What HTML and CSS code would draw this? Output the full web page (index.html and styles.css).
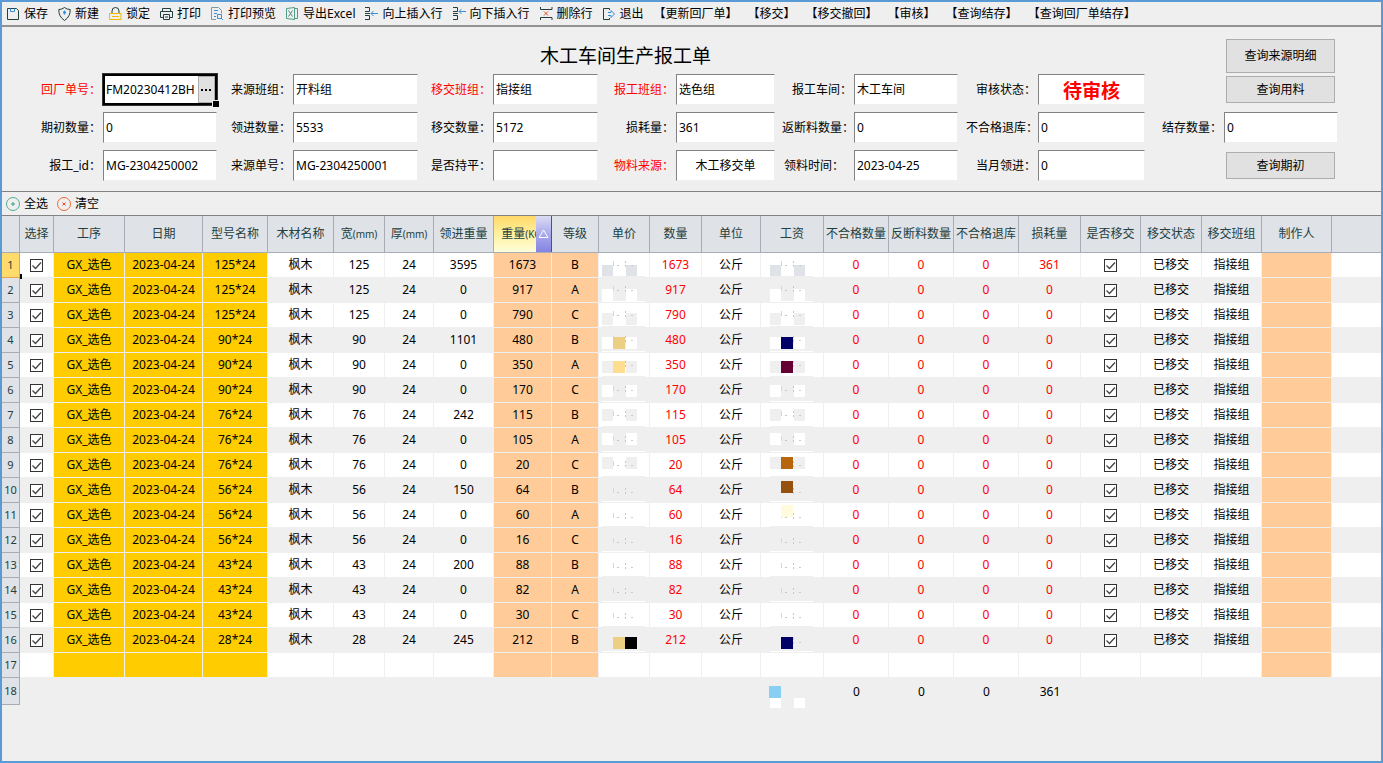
FILE: index.html
```html
<!DOCTYPE html>
<html lang="zh-CN">
<head>
  <meta charset="UTF-8">
  <title>木工车间生产报工单</title>
  <meta name="viewport" content="width=device-width, initial-scale=1.0">
  <link rel="stylesheet" href="styles.css">
</head>
<body>
  <nav class="toolbar">
    <button type="button">
      <svg class="icon" viewBox="0 0 14 14"><path d="M.5 1.5h9l2 2v9H.5z" stroke="#22403e"/><path d="M3.5 1.5v3h4v-3" stroke="#3a8ed8"/></svg>保存
    </button>
    <button type="button">
      <svg class="icon" viewBox="0 0 14 14"><path d="M6.500 .5Q4 2.500 .8 2.500Q.5 9.500 6.500 13.500Q12.500 9.500 12.200 2.500Q9 2.500 6.500 .5z" stroke="#22403e"/><path d="M6.500 3.500v4M5 5.500h3" stroke="#3a8ed8" stroke-width="1.500"/></svg>新建
    </button>
    <button type="button">
      <svg class="icon" viewBox="0 0 14 14"><path d="M3 7V4a3.500 3.500 0 0 1 7 0v3" stroke="#22403e"/><path d="M.5 6.500h11.500v6H.5zM3 9.500h7" stroke="#f5b800"/></svg>锁定
    </button>
    <button type="button">
      <svg class="icon" viewBox="0 0 14 14"><path d="M2.500 4V1.500h8V4M3 10.500H.5v-6h12v6H10M3.500 7.500h6v5h-6z" stroke="#22403e"/><path d="M5 10h3" stroke="#22403e"/></svg>打印
    </button>
    <button type="button">
      <svg class="icon" viewBox="0 0 14 14"><path d="M5 12.500H.5v-12h7l3 3v3" stroke="#7a9aa5"/><path d="M3 3.500h4M3 6.500h3M3 9.500h2M6.500 7.500h4v4h-4zM10 11l2 2" stroke="#3a8ed8"/></svg>打印预览
    </button>
    <button type="button">
      <svg class="icon" viewBox="0 0 14 14"><path d="M.5 1.500l8-1v12l-8-1zM8.500 1.500h3v10h-3" stroke="#4f9d86"/><path d="M2.500 3.500l4 6M6.500 3.500l-4 6" stroke="#3f8f78"/></svg>导出Excel
    </button>
    <button type="button">
      <svg class="icon" viewBox="0 0 14 14"><path d="M0 .5h4.500v4H0M0 8.500h4.500v4H0M0 6.500h5" stroke="#22403e"/><path d="M13 6.500H6M8.500 4L6 6.500 8.500 9" stroke="#3a8ed8"/></svg>向上插入行
    </button>
    <button type="button">
      <svg class="icon" viewBox="0 0 14 14"><path d="M0 .5h4.500v4H0M0 8.500h4.500v4H0M0 6.500h5" stroke="#22403e"/><path d="M13 4.500H6M8.500 2L6 4.500 8.500 7" stroke="#3a8ed8"/></svg>向下插入行
    </button>
    <button type="button">
      <svg class="icon" viewBox="0 0 14 14"><path d="M.5 0v2.500h11.500V0M.5 13v-2.500h11.500V13" stroke="#22403e"/><path d="M4 4.500l4 4M8 4.500l-4 4" stroke="#e8502a"/></svg>删除行
    </button>
    <button type="button">
      <svg class="icon" viewBox="0 0 14 14"><path d="M6.500 3V1.500h-6v11h6V11" stroke="#22403e"/><path d="M5 5.500h3V3.500l3.500 3.500L8 10.500v-2H5" stroke="#3a8ed8"/></svg>退出
    </button>
    <button type="button">【更新回厂单】</button>
    <button type="button">【移交】</button>
    <button type="button">【移交撤回】</button>
    <button type="button">【审核】</button>
    <button type="button">【查询结存】</button>
    <button type="button">【查询回厂单结存】</button>
  </nav>

  <form class="bill">
    <h1>木工车间生产报工单</h1>
    <button type="button" class="query tall">查询来源明细</button>

    <label class="required first" for="billNo">回厂单号：</label>
    <div class="picker">
      <input type="text" id="billNo" value="FM20230412BH">
      <button type="button" aria-label="选择回厂单号"><svg viewBox="0 0 11 2"><path d="M0 0h2v2H0zM4 0h2v2H4zM8 0h2v2H8z"/></svg></button>
    </div>
    <label for="srcTeam">来源班组：</label>
    <input type="text" id="srcTeam" value="开料组">
    <label class="required" for="moveTeam">移交班组：</label>
    <input type="text" id="moveTeam" value="指接组">
    <label class="required" for="workTeam">报工班组：</label>
    <input type="text" id="workTeam" value="选色组">
    <label for="workshop">报工车间：</label>
    <input type="text" id="workshop" value="木工车间">
    <label for="status">审核状态：</label>
    <input type="text" id="status" class="status" value="待审核">
    <button type="button" class="query">查询用料</button>

    <label class="first" for="startQty">期初数量：</label>
    <input type="text" id="startQty" value="0">
    <label for="inQty">领进数量：</label>
    <input type="text" id="inQty" value="5533">
    <label for="moveQty">移交数量：</label>
    <input type="text" id="moveQty" value="5172">
    <label for="lossQty">损耗量：</label>
    <input type="text" id="lossQty" value="361">
    <label class="long" for="backQty">返断料数量：</label>
    <input type="text" id="backQty" value="0">
    <label class="long" for="badQty">不合格退库：</label>
    <input type="text" id="badQty" value="0">
    <label for="restQty">结存数量：</label>
    <input type="text" id="restQty" value="0">

    <label class="first" for="workId">报工_id：</label>
    <input type="text" id="workId" value="MG-2304250002">
    <label for="srcNo">来源单号：</label>
    <input type="text" id="srcNo" value="MG-2304250001">
    <label for="balanced">是否持平：</label>
    <input type="text" id="balanced" value="">
    <label class="required" for="material">物料来源：</label>
    <input type="text" id="material" class="center" value="木工移交单">
    <label class="early" for="pickDate">领料时间：</label>
    <input type="text" id="pickDate" value="2023-04-25">
    <label for="monthIn">当月领进：</label>
    <input type="text" id="monthIn" value="0">
    <button type="button" class="query">查询期初</button>
  </form>

  <div class="toolbar grid-bar">
    <button type="button">
      <svg class="icon" viewBox="0 0 14 14"><circle cx="6" cy="7" r="6.500" stroke="#4fae94"/><path d="M6 5v4M4 7h4" stroke="#3f9f86"/></svg>全选
    </button>
    <button type="button">
      <svg class="icon" viewBox="0 0 14 14"><circle cx="6" cy="7" r="6.500" stroke="#f06a30"/><path d="M4.500 5.500l3 3M7.500 5.500l-3 3" stroke="#e8502a"/></svg>清空
    </button>
  </div>

  <table class="sheet">
    <colgroup>
      <col class="w18"><col class="w34"><col class="w71"><col class="w78"><col class="w65"><col class="w66">
      <col class="w51"><col class="w49"><col class="w60"><col class="w58"><col class="w47"><col class="w51">
      <col class="w52"><col class="w59"><col class="w63"><col class="w65"><col class="w65"><col class="w65">
      <col class="w62"><col class="w60"><col class="w61"><col class="w60"><col class="w70"><col>
    </colgroup>
    <thead>
      <tr>
        <th></th><th>选择</th><th>工序</th><th>日期</th><th>型号名称</th><th>木材名称</th>
        <th>宽<small>(mm)</small></th><th>厚<small>(mm)</small></th><th>领进重量</th>
        <th class="sorted">重量<small>(KG)</small><button type="button" aria-label="升序"><svg viewBox="0 0 11 10"><path d="M5.500 1L10 8.500H1z"/></svg></button></th>
        <th>等级</th><th>单价</th><th>数量</th><th>单位</th><th>工资</th><th>不合格数量</th><th>反断料数量</th>
        <th>不合格退库</th><th>损耗量</th><th>是否移交</th><th>移交状态</th><th>移交班组</th><th>制作人</th><th></th>
      </tr>
    </thead>
    <tbody id="rows"></tbody>
  </table>

  <script>
    // 型号, 宽, 领进重量, 重量, 等级
    const data = [
      ["125*24", 125, 3595, 1673, "B"],
      ["125*24", 125, 0, 917, "A"],
      ["125*24", 125, 0, 790, "C"],
      ["90*24", 90, 1101, 480, "B"],
      ["90*24", 90, 0, 350, "A"],
      ["90*24", 90, 0, 170, "C"],
      ["76*24", 76, 242, 115, "B"],
      ["76*24", 76, 0, 105, "A"],
      ["76*24", 76, 0, 20, "C"],
      ["56*24", 56, 150, 64, "B"],
      ["56*24", 56, 0, 60, "A"],
      ["56*24", 56, 0, 16, "C"],
      ["43*24", 43, 200, 88, "B"],
      ["43*24", 43, 0, 82, "A"],
      ["43*24", 43, 0, 30, "C"],
      ["28*24", 28, 245, 212, "B"]
    ];

    // 打码色块: x, y, 颜色, 相对第一行单元格
    const priceBlocks = [[14, 84, "#edcf83"], [14, 108, "#ffdd90"], [14, 384, "#edcf83"], [26, 384, "#000"]];
    const payBlocks = [
      [20, 84, "#000066"], [20, 108, "#660033"], [20, 204, "#b8660b"], [20, 228, "#965010"],
      [20, 252, "#fffbdc"], [20, 384, "#000066"], [8, 433, "#87cff3"]
    ];

    function mosaic(x, blocks) {
      let s = "";
      const rect = (rx, ry, w, h, c) => { s += `<rect x="${rx}" y="${ry}" width="${w}" height="${h}" fill="${c}"/>`; };
      for (let i = 0; i < 16; i++) {
        const tone = i === 0 ? "#dfe2e7" : i % 2 ? "#fff" : "#efefef";
        const y = 12 + i * 24;
        if (i < 9) {
          rect(x, y, 11, 12, tone);
          rect(x + 24, y, 11, 12, tone);
        }
        // 行间的残边
        rect(x, i * 25 + 23, 43, 3, i % 2 ? "#fff" : "#efefef");
        // 数字残留的像素
        const t = i * 25 + (i < 9 ? 8 : 10);
        rect(x + 11, t, 1, 5, "#d5d5dc");
        rect(x + 15, t + 4, 2, 1, "#c4c4c4");
        rect(x + 23, t, 1, 2, "#c8c8bc");
        rect(x + 23, t + 4, 1, 2, "#c8c8bc");
        rect(x + 29, t + 4, 2, 1, "#cccccc");
      }
      blocks.forEach(([bx, by, c]) => rect(bx, by, 12, 12, c));
      return s;
    }

    const priceMask = `<svg class="mask">${mosaic(3, priceBlocks)}</svg>`;
    const payMask = `<svg class="mask">${mosaic(9, payBlocks)}<rect x="9" y="445" width="11" height="10" fill="#fff"/><rect x="33" y="445" width="11" height="10" fill="#fff"/></svg>`;
    const check = (name) => `<input type="checkbox" aria-label="${name}" checked>`;

    let html = "";
    data.forEach(([model, width, inWeight, weight, grade], i) => {
      html += `<tr>
        <th${i ? "" : ' class="current"'}>${i + 1}</th>
        <td${i ? "" : ' class="active"'}>${check("选择")}</td>
        <td class="gold">GX_选色</td><td class="gold">2023-04-24</td><td class="gold">${model}</td>
        <td>枫木</td><td>${width}</td><td>24</td><td>${inWeight}</td>
        <td class="peach">${weight}</td><td class="peach">${grade}</td>
        <td class="masked">${i ? "" : priceMask}</td><td class="red">${weight}</td><td>公斤</td>
        <td class="masked">${i ? "" : payMask}</td>
        <td class="red">0</td><td class="red">0</td><td class="red">0</td><td class="red">${i ? 0 : 361}</td>
        <td>${check("是否移交")}</td><td>已移交</td><td>指接组</td><td class="peach"></td><td></td>
      </tr>`;
    });

    const colors = { 2: "gold", 3: "gold", 4: "gold", 9: "peach", 10: "peach", 22: "peach" };
    html += "<tr><th>17</th>";
    for (let c = 1; c < 24; c++) html += `<td class="${colors[c] || ""}"></td>`;
    html += "</tr>";

    const totals = { 15: 0, 16: 0, 17: 0, 18: 361 };
    html += '<tr class="total"><th>18</th>';
    for (let c = 1; c < 24; c++) html += `<td>${totals[c] ?? ""}</td>`;
    html += "</tr>";

    document.getElementById("rows").innerHTML = html;
  </script>
</body>
</html>
```
FILE: styles.css
```css
* {
  box-sizing: border-box;
}

body {
  margin: 0;
  min-height: 100vh;
  border: 2px solid #5b9bd5;
  background: #efefef;
  color: #000;
  font-family: "Noto Sans", "Noto Sans CJK SC", sans-serif;
  font-size: 12px;
  line-height: 18px;
}

button,
input {
  font: inherit;
  color: inherit;
}

/* toolbars */
.toolbar {
  display: flex;
  align-items: center;
  gap: 10px;
  height: 25px;
  padding: 0 5px;
  border-bottom: 2px solid #929292;
}

.toolbar button {
  display: flex;
  align-items: center;
  gap: 3px;
  padding: 0;
  border: none;
  background: none;
  white-space: nowrap;
}

.icon {
  width: 14px;
  height: 14px;
  fill: none;
  overflow: visible;
}

.grid-bar {
  height: 24px;
  border-bottom: 1px solid #828282;
}

/* bill header */
.bill {
  display: grid;
  grid-template-columns:
    101px 114fr 76px 125fr 75px 105fr 78px 99fr
    79px 104fr 80px 107fr 79px 114fr;
  grid-template-rows: 28px;
  grid-auto-rows: 31px;
  row-gap: 7px;
  padding: 12px 43px 10px 0;
  border-bottom: 1px solid #828282;
}

.bill h1 {
  grid-column: 4 / 11;
  height: 34px;
  margin: 0;
  font-size: 19px;
  font-weight: normal;
  line-height: 34px;
  text-align: center;
}

.bill label {
  align-self: center;
  padding-right: 2px;
  text-align: right;
  white-space: nowrap;
}

.bill .first {
  grid-column: 1;
}

.bill .long {
  padding-right: 0;
}

.bill .early {
  padding-right: 10px;
}

.bill .required {
  color: #f00;
}

.bill input {
  width: 100%;
  min-width: 0;
  padding: 0 2px;
  border: 1px solid;
  border-color: #828282 #efefef #efefef #828282;
  background: #fff;
  outline: none;
}

.bill .status {
  color: #f00;
  font-size: 19px;
  font-weight: bold;
  text-align: center;
}

.bill .center {
  text-align: center;
}

.picker {
  position: relative;
  display: flex;
  min-width: 0;
  border: 2px solid #000;
  box-shadow: 0 0 0 1px #333;
}

.picker::after {
  content: "";
  position: absolute;
  right: -4px;
  bottom: -4px;
  width: 6px;
  height: 6px;
  border: 1px solid #efefef;
  border-width: 1px 0 0 1px;
  background: #000;
}

.picker input {
  flex: 1;
  padding: 0 0 0 1px;
  border: none;
}

.picker button {
  width: 17px;
  padding: 0;
  border: 1px solid #adadad;
  background: #e1e1e1;
}

.picker svg {
  display: block;
  width: 11px;
  height: 2px;
  margin: 0 2px;
}

.query {
  grid-column: 14;
  align-self: center;
  height: 27px;
  margin: 0 3px 0 2px;
  padding: 0;
  border: 1px solid #adadad;
  background: #e1e1e1;
}

.tall {
  align-self: start;
  height: 34px;
}

/* sheet */
.sheet {
  width: 100%;
  table-layout: fixed;
  border-collapse: separate;
  border-spacing: 0;
}

.w18 { width: 18px; }
.w34 { width: 34px; }
.w47 { width: 47px; }
.w49 { width: 49px; }
.w51 { width: 51px; }
.w52 { width: 52px; }
.w58 { width: 58px; }
.w59 { width: 59px; }
.w60 { width: 60px; }
.w61 { width: 61px; }
.w62 { width: 62px; }
.w63 { width: 63px; }
.w65 { width: 65px; }
.w66 { width: 66px; }
.w70 { width: 70px; }
.w71 { width: 71px; }
.w78 { width: 78px; }

.sheet th,
.sheet td {
  height: 25px;
  padding: 0;
  border: 0 solid #efefef;
  border-width: 0 1px 1px 0;
  text-align: center;
  white-space: nowrap;
}

.sheet th {
  border-color: #a8adb5;
  background: #dfe2e7;
  color: #22403e;
  font-weight: normal;
}

.sheet thead th {
  height: 37px;
}

.sheet small {
  font-size: 10px;
}

.sheet tbody th {
  font-size: 11px;
}

.sheet tbody tr:nth-child(odd) {
  background: #fff;
}

.sheet th:last-child,
.sheet td:last-child {
  border-right: none;
}

.sheet .sorted {
  position: relative;
  overflow: hidden;
  border-right: none;
  background: linear-gradient(#ffd968, #fff0a0 50%, #ffffd8);
}

.sorted button {
  position: absolute;
  top: 0;
  right: 0;
  width: 16px;
  height: 37px;
  padding: 0;
  border: 0 solid #55555f;
  border-width: 0 1px 1px 0;
  background: linear-gradient(#dcdcf2, #a9a9ee 50%, #8484e2);
}

.sorted svg {
  display: block;
  width: 11px;
  height: 10px;
  margin: 0 2px;
  fill: none;
  stroke: #fff;
}

.sheet .current {
  border-color: #e0a84a;
  background: #ffdb6b;
}

.sheet .gold {
  background: #ffcc00;
}

.sheet .peach {
  background: #ffcc99;
}

.sheet .red {
  color: #f00;
}

.sheet .total th {
  height: 27px;
}

.sheet .total td {
  border: none;
}

.sheet .total {
  background: #efefef;
}

.sheet input {
  display: block;
  width: 13px;
  height: 13px;
  margin: 0 auto;
  appearance: none;
  border: 1px solid #333;
  background: #fff;
}

.sheet input:checked {
  background: #fff url("data:image/svg+xml,%3Csvg xmlns='http://www.w3.org/2000/svg' viewBox='0 0 11 11'%3E%3Cpath d='M1.500 5.500l3 3 5.500-6' fill='none' stroke='%23444' stroke-width='1.300'/%3E%3C/svg%3E");
}

/* selected cell handle */
.active {
  position: relative;
}

.active::after {
  content: "";
  position: absolute;
  left: 0;
  bottom: -2px;
  width: 2px;
  height: 5px;
  background: #000;
}

.masked {
  position: relative;
}

.mask {
  position: absolute;
  top: 0;
  left: 0;
  width: 1px;
  height: 1px;
  overflow: visible;
}
```
